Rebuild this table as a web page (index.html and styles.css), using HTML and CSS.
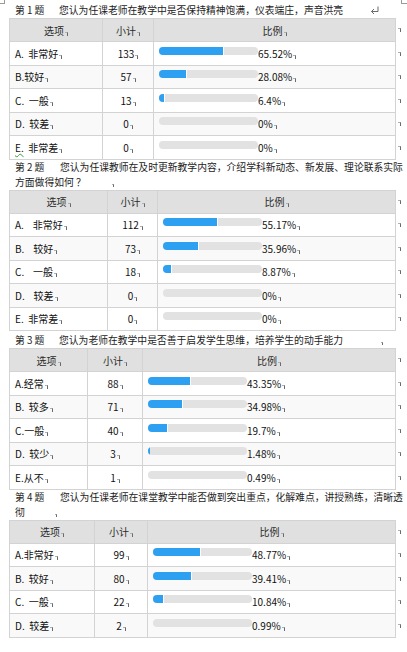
FILE: index.html
```html
<!DOCTYPE html>
<html lang="zh-CN">
<head>
<meta charset="utf-8">
<title>问卷统计</title>
<link rel="stylesheet" href="styles.css">
</head>
<body>
<div class="page">
  <span class="crop-l"></span><span class="crop-r"></span>

  <p class="q q1"><span class="qn">第 1 题</span>您认为任课老师在教学中是否保持精神饱满，仪表端庄，声音洪亮<svg class="ret" width="9" height="8" viewBox="0 0 9 8"><path d="M8 0.5V5.5H1.5M1.5 5.5L4 3M1.5 5.5L4 8" fill="none" stroke="#6b6b6b" stroke-width="1"/></svg></p>
  <div class="tbl t1">
    <div class="row head"><div class="c"><span class="t">选项</span></div><div class="c"><span class="t">小计</span></div><div class="c"><span class="t">比例</span></div><div class="e"></div></div>
    <div class="row"><div class="c"><span class="t">A.&nbsp;&nbsp;非常好</span></div><div class="c num"><span class="t">133</span></div><div class="c pct"><span class="bar"><span class="fill" style="width:65.52%"></span></span><span class="t">65.52%</span></div><div class="e"></div></div>
    <div class="row"><div class="c"><span class="t">B.较好</span></div><div class="c num"><span class="t">57</span></div><div class="c pct"><span class="bar"><span class="fill" style="width:28.08%"></span></span><span class="t">28.08%</span></div><div class="e"></div></div>
    <div class="row"><div class="c"><span class="t">C.&nbsp;&nbsp;一般</span></div><div class="c num"><span class="t">13</span></div><div class="c pct"><span class="bar"><span class="fill" style="width:6.4%"></span></span><span class="t">6.4%</span></div><div class="e"></div></div>
    <div class="row"><div class="c"><span class="t">D.&nbsp;&nbsp;较差</span></div><div class="c num"><span class="t">0</span></div><div class="c pct"><span class="bar"></span><span class="t">0%</span></div><div class="e"></div></div>
    <div class="row"><div class="c"><span class="t"><span class="wavy">E.</span>&nbsp;&nbsp;非常差</span></div><div class="c num"><span class="t">0</span></div><div class="c pct"><span class="bar"></span><span class="t">0%</span></div><div class="e"></div></div>
  </div>

  <p class="q q2"><span class="qn">第 2 题</span>您认为任课教师在及时更新教学内容，介绍学科新动态、新发展、理论联系实际<br>方面做得如何 ？<span class="pm pm2"></span></p>
  <div class="tbl t2">
    <div class="row head"><div class="c"><span class="t">选项</span></div><div class="c"><span class="t">小计</span></div><div class="c"><span class="t">比例</span></div><div class="e"></div></div>
    <div class="row"><div class="c"><span class="t">A.&nbsp;&nbsp;&nbsp;&nbsp;非常好</span></div><div class="c num"><span class="t">112</span></div><div class="c pct"><span class="bar"><span class="fill" style="width:55.17%"></span></span><span class="t">55.17%</span></div><div class="e"></div></div>
    <div class="row"><div class="c"><span class="t">B.&nbsp;&nbsp;&nbsp;&nbsp;较好</span></div><div class="c num"><span class="t">73</span></div><div class="c pct"><span class="bar"><span class="fill" style="width:35.96%"></span></span><span class="t">35.96%</span></div><div class="e"></div></div>
    <div class="row"><div class="c"><span class="t">C.&nbsp;&nbsp;&nbsp;&nbsp;一般</span></div><div class="c num"><span class="t">18</span></div><div class="c pct"><span class="bar"><span class="fill" style="width:8.87%"></span></span><span class="t">8.87%</span></div><div class="e"></div></div>
    <div class="row"><div class="c"><span class="t">D.&nbsp;&nbsp;&nbsp;&nbsp;较差</span></div><div class="c num"><span class="t">0</span></div><div class="c pct"><span class="bar"></span><span class="t">0%</span></div><div class="e"></div></div>
    <div class="row"><div class="c"><span class="t">E.&nbsp;&nbsp;非常差</span></div><div class="c num"><span class="t">0</span></div><div class="c pct"><span class="bar"></span><span class="t">0%</span></div><div class="e"></div></div>
  </div>

  <p class="q q3"><span class="qn">第 3 题</span>您认为老师在教学中是否善于启发学生思维，培养学生的动手能力<span class="pm pm3"></span></p>
  <div class="tbl t3">
    <div class="row head"><div class="c"><span class="t">选项</span></div><div class="c"><span class="t">小计</span></div><div class="c"><span class="t">比例</span></div><div class="e"></div></div>
    <div class="row"><div class="c"><span class="t">A.经常</span></div><div class="c num"><span class="t">88</span></div><div class="c pct"><span class="bar"><span class="fill" style="width:43.35%"></span></span><span class="t">43.35%</span></div><div class="e"></div></div>
    <div class="row"><div class="c"><span class="t">B.&nbsp;&nbsp;较多</span></div><div class="c num"><span class="t">71</span></div><div class="c pct"><span class="bar"><span class="fill" style="width:34.98%"></span></span><span class="t">34.98%</span></div><div class="e"></div></div>
    <div class="row"><div class="c"><span class="t">C.一般</span></div><div class="c num"><span class="t">40</span></div><div class="c pct"><span class="bar"><span class="fill" style="width:19.7%"></span></span><span class="t">19.7%</span></div><div class="e"></div></div>
    <div class="row"><div class="c"><span class="t">D.&nbsp;&nbsp;较少</span></div><div class="c num"><span class="t">3</span></div><div class="c pct"><span class="bar"><span class="fill thin" style="width:1.48%"></span></span><span class="t">1.48%</span></div><div class="e"></div></div>
    <div class="row"><div class="c"><span class="t">E.从不</span></div><div class="c num"><span class="t">1</span></div><div class="c pct"><span class="bar"></span><span class="t">0.49%</span></div><div class="e"></div></div>
  </div>

  <p class="q q4"><span class="qn">第 4 题</span>您认为任课老师在课堂教学中能否做到突出重点，化解难点，讲授熟练，清晰透<br>彻<span class="pm pm4"></span></p>
  <div class="tbl t4">
    <div class="row head"><div class="c"><span class="t">选项</span></div><div class="c"><span class="t">小计</span></div><div class="c"><span class="t">比例</span></div><div class="e"></div></div>
    <div class="row"><div class="c"><span class="t">A.非常好</span></div><div class="c num"><span class="t">99</span></div><div class="c pct"><span class="bar"><span class="fill" style="width:48.77%"></span></span><span class="t">48.77%</span></div><div class="e"></div></div>
    <div class="row"><div class="c"><span class="t">B.&nbsp;&nbsp;较好</span></div><div class="c num"><span class="t">80</span></div><div class="c pct"><span class="bar"><span class="fill" style="width:39.41%"></span></span><span class="t">39.41%</span></div><div class="e"></div></div>
    <div class="row"><div class="c"><span class="t">C.&nbsp;&nbsp;一般</span></div><div class="c num"><span class="t">22</span></div><div class="c pct"><span class="bar"><span class="fill" style="width:10.84%"></span></span><span class="t">10.84%</span></div><div class="e"></div></div>
    <div class="row"><div class="c"><span class="t">D.&nbsp;&nbsp;较差</span></div><div class="c num"><span class="t">2</span></div><div class="c pct"><span class="bar"></span><span class="t">0.99%</span></div><div class="e"></div></div>
  </div>
</div>
</body>
</html>
```
FILE: styles.css
```css
* { box-sizing: border-box; }
html, body { margin: 0; padding: 0; background: #fff; }
body {
  font-family: "Noto Sans CJK SC", "Noto Sans", sans-serif;
  color: #111;
  width: 407px;
  overflow: hidden;
}
.page { position: relative; padding: 3px 0 0 9px; }

.crop-l {
  position: absolute; left: 0; top: 0; width: 5px; height: 4px;
  border-right: 1px solid #9a9a9a; border-bottom: 1px solid #9a9a9a;
}
.crop-r {
  position: absolute; left: 401px; top: 0; width: 6px; height: 4px;
  border-left: 1px solid #9a9a9a; border-bottom: 1px solid #9a9a9a;
}

.q {
  margin: 0;
  padding-left: 6px;
  font-size: 9.8px;
  line-height: 15px;
  white-space: nowrap;
  color: #1c1c1c;
}
.q3 { padding-top: 2px; }
.qn { display: inline-block; width: 44px; }
.q2 .qn, .q4 .qn { width: 45px; }
.ret { margin-left: 27px; vertical-align: 0; }

.pm, .t::after, .e::after {
  content: "";
  display: inline-block;
  width: 2px;
  height: 3px;
  border-top: 1px solid #b0b0b0;
  border-right: 1px solid #6a6a6a;
  vertical-align: -1px;
}
.t::after { margin-left: 1px; }
.pm2 { margin-left: 26px; }
.pm3 { margin-left: 38px; }
.pm4 { margin-left: 30px; }

.wavy { text-decoration: underline wavy #3aa33a; text-decoration-thickness: 1px; }

.tbl { display: grid; width: 398px; }
.row { display: grid; grid-template-columns: var(--cols); height: 23.5px; }
.row.head { height: 24px; }
.t1 { --cols: 94px 51px 242px 11px; }
.t2 { --cols: 99px 50px 238px 11px; }
.t3 { --cols: 79px 55px 253px 11px; }
.t4 { --cols: 86px 53px 248px 11px; }

.c {
  display: flex;
  align-items: center;
  padding: 0 5px;
  border-right: 1px solid #d3d3d3;
  border-bottom: 1px solid #d3d3d3;
  background: #fff;
  font-size: 10px;
  white-space: nowrap;
}
.c:first-child { border-left: 1px solid #d3d3d3; }
.head .c {
  border-top: 1px solid #d3d3d3;
  background: #e0e0e0;
  justify-content: center;
  color: #2a2a2a;
}
.row:nth-child(odd):not(.head) .c { background: #f9f9f9; }
.num { justify-content: center; }
.e { display: flex; align-items: center; padding-left: 2px; }

.pct { padding-left: 5px; }
.bar {
  display: flex;
  flex: none;
  width: 99px;
  height: 8px;
  border-radius: 4px;
  background: #e2e2e3;
  overflow: hidden;
  margin-bottom: 5px;
}
.fill {
  height: 100%;
  background: #2ea0f2;
  border-right: 1px solid #fff;
}
.fill.thin { border-right: 0; min-width: 2px; }
```
